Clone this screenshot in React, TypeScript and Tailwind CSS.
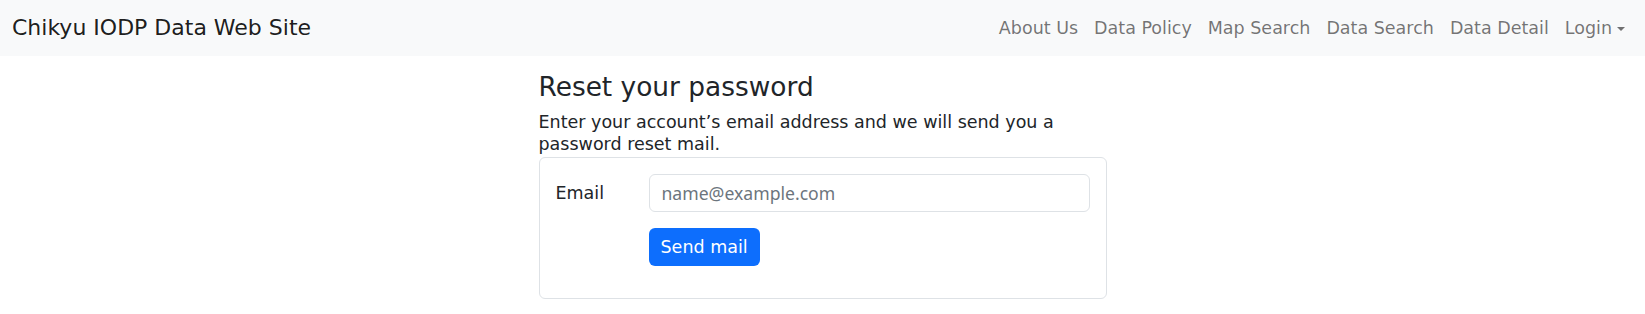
import React from 'react';

const navLinks = ['About Us', 'Data Policy', 'Map Search', 'Data Search', 'Data Detail'];

const Navbar: React.FC = () => (
  <nav className="h-[56px] bg-[#f8f9fa] flex items-center justify-between px-3">
    <a className="text-[22px] leading-[30px] text-black/90 whitespace-nowrap">Chikyu IODP Data Web Site</a>
    <ul className="flex items-center">
      {navLinks.map((l) => (
        <li key={l}>
          <a className="block px-2 text-[17.5px] leading-[24px] text-black/55 whitespace-nowrap">{l}</a>
        </li>
      ))}
      <li>
        <a className="flex items-center px-2 text-[17.5px] leading-[24px] text-black/55 whitespace-nowrap">
          Login
          <span className="ml-[5px] mt-[2px] w-0 h-0 border-l-[4px] border-r-[4px] border-t-[4px] border-l-transparent border-r-transparent border-t-black/55" />
        </a>
      </li>
    </ul>
  </nav>
);

export default function App() {
  return (
    <div className="min-h-[314px] bg-white font-['DejaVu_Sans',sans-serif] text-[#212529]">
      <Navbar />

      <main className="w-[568px] mx-auto">
        <h4 className="mt-[15px] mb-2 text-[26.4px] leading-[31.7px] font-normal">Reset your password</h4>
        <p className="mb-[2px] text-[17.5px] leading-[22px]">
          Enter your account’s email address and we will send you a password reset mail.
        </p>

        {/* Card */}
        <div className="border border-[#dee2e6] rounded-[6px] p-4">
          <div className="flex mb-4">
            <label className="w-[93px] shrink-0 pt-[7px] text-[17.5px] leading-[24px]">Email</label>
            <input
              type="email"
              placeholder="name@example.com"
              className="flex-1 h-[38px] px-3 border border-[#dee2e6] rounded-[6px] font-['Noto_Sans',sans-serif] text-[17.6px] placeholder:text-[#6c757d] outline-none"
            />
          </div>
          <div className="flex mb-4">
            <div className="w-[93px] shrink-0" />
            <button className="h-[38px] px-3 bg-[#0d6efd] text-white text-[17.5px] leading-[24px] rounded-[6px]">
              Send mail
            </button>
          </div>
        </div>
      </main>
    </div>
  );
}
